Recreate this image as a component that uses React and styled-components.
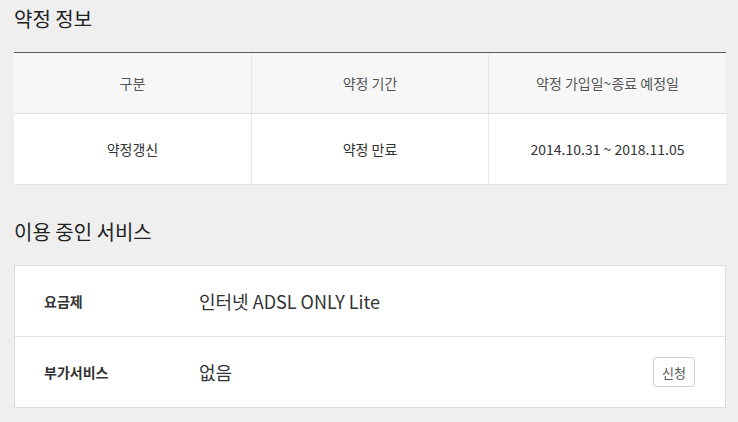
import React from "react";
import styled, { createGlobalStyle } from "styled-components";

const Global = createGlobalStyle`
  html, body { margin: 0; padding: 0; background: #efefef; }
  body { font-family: "Noto Sans CJK KR", "Noto Sans", sans-serif; color: #333; }
`;

const Page = styled.div`
  padding: 4px 12px 0 14px;
  width: 712px;
`;

const Title = styled.h2`
  margin: 0;
  font-size: 20px;
  font-weight: 400;
  color: #222;
  line-height: 30px;
  height: 30px;
  margin-bottom: ${(p) => p.$gap}px;
`;

const Table = styled.div`
  display: grid;
  grid-template-columns: 237px 237px 1fr;
  border-top: 1px solid #5a5a5a;
  background: #fff;
  border-bottom: 1px solid #e2e2e2;
`;

const Cell = styled.div`
  display: flex;
  align-items: center;
  justify-content: center;
  height: ${(p) => (p.$head ? 60 : 70)}px;
  background: ${(p) => (p.$head ? "#f7f7f7" : "#fff")};
  border-bottom: ${(p) => (p.$head ? "1px solid #dcdcdc" : "none")};
  border-left: ${(p) => (p.$first ? "none" : "1px solid #e8e8e8")};
  font-size: 14px;
  color: ${(p) => (p.$head ? "#555" : "#333")};
`;

const Spacer = styled.div`
  height: ${(p) => p.$h}px;
`;

const Box = styled.div`
  background: #fff;
  border: 1px solid #dcdcdc;
`;

const Row = styled.div`
  display: flex;
  align-items: center;
  height: 70px;
  padding: 0 30px 0 29px;
  border-top: ${(p) => (p.$first ? "none" : "1px solid #e0e0e0")};
`;

const Label = styled.div`
  width: 155px;
  font-size: 14px;
  font-weight: 700;
  color: #333;
`;

const Value = styled.div`
  flex: 1;
  font-size: 18px;
  color: #333;
`;

const Button = styled.button`
  width: 42px;
  height: 30px;
  padding: 0;
  border: 1px solid #cfcfcf;
  border-radius: 3px;
  background: #fff;
  font-family: inherit;
  font-size: 13px;
  color: #555;
`;

export default function App() {
  return (
    <>
      <Global />
      <Page>
        <Title $gap={18}>약정 정보</Title>
        <Table>
          <Cell $head $first>구분</Cell>
          <Cell $head>약정 기간</Cell>
          <Cell $head>약정 가입일~종료 예정일</Cell>
          <Cell $first>약정갱신</Cell>
          <Cell>약정 만료</Cell>
          <Cell>2014.10.31 ~ 2018.11.05</Cell>
        </Table>
        <Spacer $h={32} />
        <Title $gap={18}>이용 중인 서비스</Title>
        <Box>
          <Row $first>
            <Label>요금제</Label>
            <Value>인터넷 ADSL ONLY Lite</Value>
          </Row>
          <Row>
            <Label>부가서비스</Label>
            <Value>없음</Value>
            <Button>신청</Button>
          </Row>
        </Box>
      </Page>
    </>
  );
}
